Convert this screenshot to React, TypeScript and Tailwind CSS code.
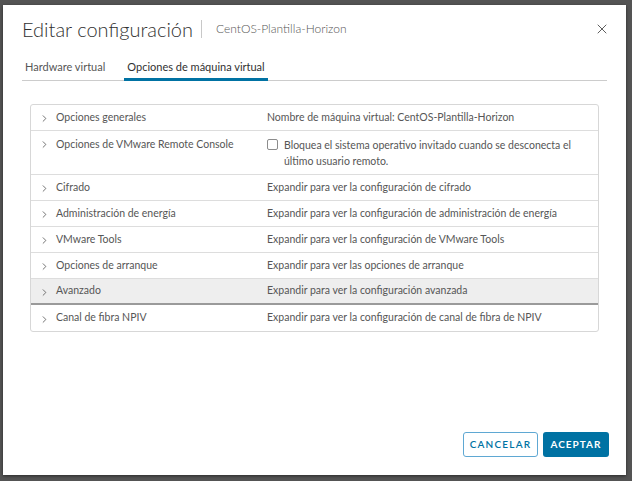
import { ChevronRight, X } from "lucide-react";

const rows = [
  { label: "Opciones generales", value: "Nombre de máquina virtual: CentOS-Plantilla-Horizon" },
  { label: "Opciones de VMware Remote Console", value: "", checkbox: true },
  { label: "Cifrado", value: "Expandir para ver la configuración de cifrado" },
  { label: "Administración de energía", value: "Expandir para ver la configuración de administración de energía" },
  { label: "VMware Tools", value: "Expandir para ver la configuración de VMware Tools" },
  { label: "Opciones de arranque", value: "Expandir para ver las opciones de arranque" },
  { label: "Avanzado", value: "Expandir para ver la configuración avanzada", active: true },
  { label: "Canal de fibra NPIV", value: "Expandir para ver la configuración de canal de fibra de NPIV" },
];

export default function App() {
  return (
    <div
      className="w-[632px] h-[481px] bg-[#545454] pt-[5px] pl-[3px] overflow-hidden"
      style={{ fontFamily: '"Lato", "Open Sans", sans-serif' }}
    >
      <div className="w-[623px] h-[470px] bg-white flex flex-col shadow-[0_1px_3px_rgba(0,0,0,0.5)]">
        {/* Header */}
        <div className="flex items-center pl-[19px] pr-[16px] pt-[4px] h-[43px]">
          <h1 className="text-[20px] font-light text-[#313131] leading-none">Editar configuración</h1>
          <div className="w-px h-[18px] bg-[#c8c8c8] ml-[8px] mr-[14px]" />
          <span className="text-[12px] font-light text-[#565656]">CentOS-Plantilla-Horizon</span>
          <X className="ml-auto w-[16px] h-[16px] text-[#444]" strokeWidth={1.3} />
        </div>

        {/* Tabs */}
        <div className="mx-[19px] mt-[9px] flex border-b border-[#cccccc] h-[24px] text-[11px] text-[#565656]">
          <div className="ml-[3px] mr-[19px] pt-[2px]">Hardware virtual</div>
          <div className="relative px-[3px] pt-[2px] text-[#313131]">
            Opciones de máquina virtual
            <div className="absolute left-0 right-0 bottom-[-1px] h-[3px] bg-[#0072a3]" />
          </div>
        </div>

        {/* Table */}
        <div className="mx-[27px] mt-[23px] border border-[#d7d7d7] rounded-[3px] text-[10.5px] text-[#565656]">
          {rows.map((r, i) => (
            <div
              key={r.label}
              className={`flex ${r.checkbox ? "h-[44px] pt-[6px]" : "h-[26px] items-center"} ${
                r.active ? "bg-[#eeeeee] border-b-2 border-[#9a9a9a]" : i < rows.length - 1 ? "border-b border-[#dddddd]" : ""
              }`}
            >
              <div className={`w-[236px] flex ${r.checkbox ? "items-start" : "items-center"} pl-[8px]`}>
                <ChevronRight className="w-[11px] h-[11px] text-[#565656] mt-[2px]" strokeWidth={1.8} />
                <span className="ml-[6px]">{r.label}</span>
              </div>
              {r.checkbox ? (
                <div className="flex items-start">
                  <div className="w-[11px] h-[11px] border border-[#8c8c8c] rounded-[2px] mt-[2px] mr-[6px] shrink-0" />
                  <div className="leading-[16px] w-[310px]">
                    Bloquea el sistema operativo invitado cuando se desconecta el último usuario remoto.
                  </div>
                </div>
              ) : (
                <div>{r.value}</div>
              )}
            </div>
          ))}
        </div>

        {/* Footer */}
        <div className="mt-auto mb-[18px] mr-[17px] flex justify-end gap-[5px]">
          <button className="w-[75px] h-[25px] border border-[#5fa8d3] rounded-[3px] text-[#0072a3] text-[10px] font-semibold tracking-[1.2px]">
            CANCELAR
          </button>
          <button className="w-[66px] h-[25px] bg-[#0072a3] rounded-[3px] text-white text-[10px] font-bold tracking-[1px]">
            ACEPTAR
          </button>
        </div>
      </div>
    </div>
  );
}
